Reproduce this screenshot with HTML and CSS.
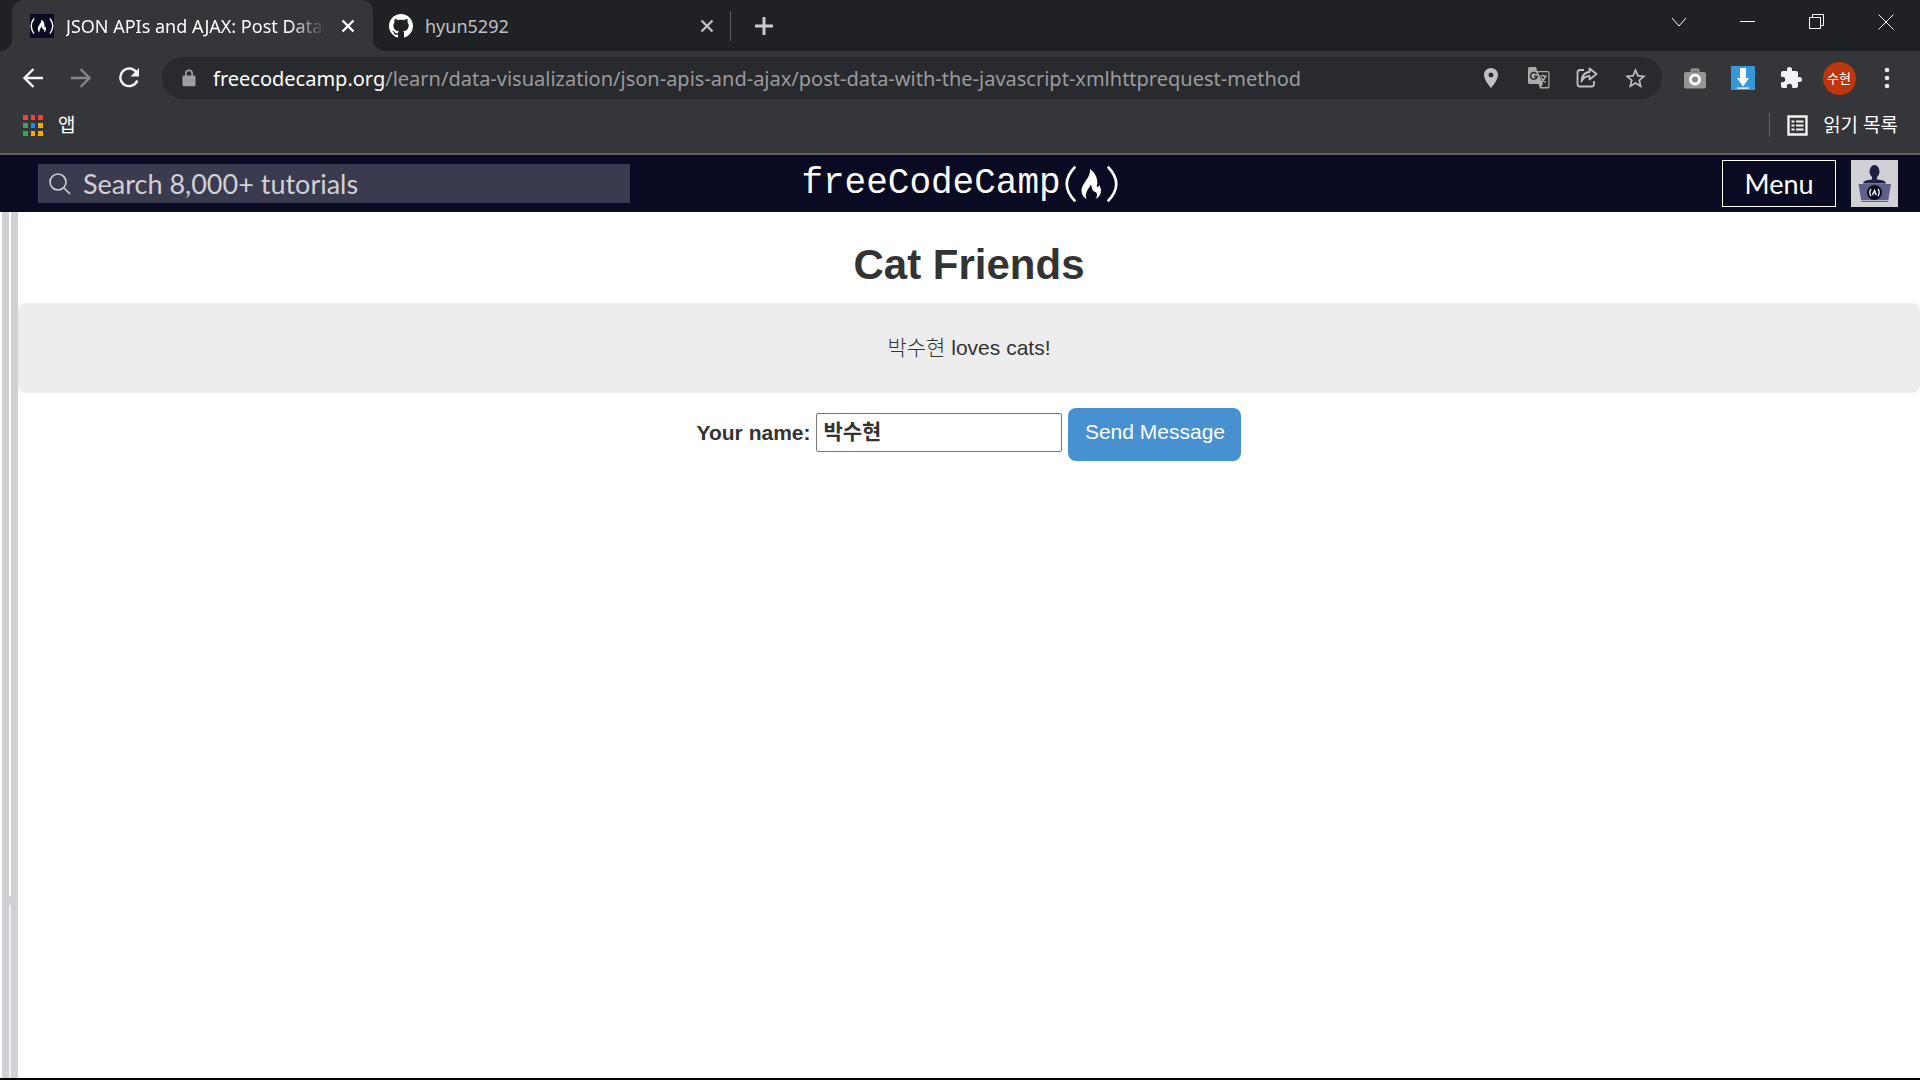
FILE: index.html
```html
<!DOCTYPE html>
<html lang="ko">
<head>
<meta charset="utf-8">
<title>JSON APIs and AJAX: Post Data</title>
<link rel="stylesheet" href="styles.css">
</head>
<body>
<svg class="defs" aria-hidden="true">
  <symbol id="flame" viewBox="0 0 20 30"><path d="M8.500 0C9 5 6.500 8.500 3.500 13C1 16.500 0 19 0 21.500C0 25 1.500 28 5 30C4 27.500 4 25 5.500 22C7 19 8.500 17.500 9.500 15.500C10.500 19 10.500 21.500 12.500 22.500C15 23 15.500 24 15.500 26C15.500 27.500 15 28.800 14 30C17.500 28 19.500 25.500 19.500 21.500C19.500 19.500 18.500 18 18 16C17.200 17 17 18 15.800 18C14.500 17.500 16.200 15 15.800 13C15.500 7 12.500 3 8.500 0Z"/></symbol>
  <symbol id="cross" viewBox="0 0 14 14"><path d="M1.500 1.500 12.500 12.500M12.500 1.500 1.500 12.500" fill="none" stroke="currentColor" stroke-width="2.400"/></symbol>
</svg>
<header class="browser">
  <div class="tabstrip">
    <div class="tab tab-active">
      <svg class="favicon" viewBox="0 0 24 24"><rect width="24" height="24" fill="#0a0a23"/><path d="M4 4.500Q-1.500 12 4 19.500M20 4.500Q25.500 12 20 19.500" fill="none" stroke="#fff" stroke-width="1.400"/><use href="#flame" x="7.500" y="5.500" width="9" height="13" fill="#fff"/></svg>
      <span class="tab-title fade">JSON APIs and AJAX: Post Data</span>
      <button class="tab-close" aria-label="Close tab"><svg width="14" height="14"><use href="#cross"/></svg></button>
    </div>
    <div class="tab">
      <svg class="favicon" viewBox="0 0 16 16" fill="#fff"><path d="M8 0C3.580 0 0 3.580 0 8c0 3.540 2.290 6.530 5.470 7.590.4.070.55-.17.55-.38 0-.19-.01-.82-.01-1.490-2.010.37-2.530-.49-2.690-.94-.09-.23-.48-.94-.82-1.130-.28-.15-.68-.52-.01-.53.63-.01 1.080.58 1.230.82.72 1.210 1.870.87 2.330.66.070-.52.28-.87.51-1.070-1.780-.2-3.640-.89-3.640-3.950 0-.87.31-1.590.82-2.150-.08-.2-.36-1.020.08-2.120 0 0 .67-.21 2.200.82.64-.18 1.320-.27 2-.27s1.360.09 2 .27c1.530-1.040 2.200-.82 2.200-.82.44 1.100.16 1.920.08 2.120.51.56.82 1.270.82 2.150 0 3.070-1.870 3.750-3.650 3.950.29.25.54.73.54 1.480 0 1.070-.01 1.930-.01 2.200 0 .21.15.46.55.38A8.010 8.010 0 0 0 16 8c0-4.420-3.580-8-8-8z"/></svg>
      <span class="tab-title">hyun5292</span>
      <button class="tab-close" aria-label="Close tab"><svg width="14" height="14"><use href="#cross"/></svg></button>
    </div>
    <button class="new-tab" aria-label="New tab"><svg width="18" height="18" viewBox="0 0 18 18"><path d="M9 0V18M0 9H18" stroke="currentColor" stroke-width="3"/></svg></button>
    <div class="window-controls">
      <button aria-label="Search tabs"><svg width="16" height="16" viewBox="0 0 16 16"><path d="M1 4 8 12 15 4"/></svg></button>
      <button aria-label="Minimize"><svg width="15" height="15" viewBox="0 0 15 15"><path d="M0 7.500H15"/></svg></button>
      <button aria-label="Restore"><svg width="15" height="15" viewBox="0 0 15 15"><path d="M.5 3.500h11v11H.5zM3.500 3V.5h11v11H12"/></svg></button>
      <button aria-label="Close"><svg width="16" height="16" viewBox="0 0 16 16"><path d="M.5.5l15 15M15.500.5l-15 15"/></svg></button>
    </div>
  </div>
  <div class="toolbar">
    <button class="tool" aria-label="Back"><svg width="20" height="20" viewBox="0 0 20 20"><path d="M20 10H2M10.500 1 1.500 10l9 9" fill="none" stroke="#f1f3f4" stroke-width="2.400"/></svg></button>
    <button class="tool" aria-label="Forward"><svg width="20" height="20" viewBox="0 0 20 20"><path d="M0 10H18M9.500 1l9 9-9 9" fill="none" stroke="#85868a" stroke-width="2.400"/></svg></button>
    <button class="tool" aria-label="Reload"><svg width="22" height="22" viewBox="0 0 22 22"><path d="M18.500 5.500A8.800 8.800 0 1 0 19.300 13.500" fill="none" stroke="#f1f3f4" stroke-width="2.400"/><path d="M21 1V9.500H12.500z" fill="#f1f3f4"/></svg></button>
    <div class="omnibox">
      <svg class="lock" width="14" height="18" viewBox="0 0 14 18"><path d="M1.500 6.500H3V4.500a4 4 0 0 1 8 0V6.500h1.500A1 1 0 0 1 13.500 7.500V16a1.200 1.200 0 0 1-1.200 1.200H1.700A1.200 1.200 0 0 1 .5 16V7.500a1 1 0 0 1 1-1zM4.700 6.500H9.300V4.500a2.300 2.300 0 0 0-4.600 0z" fill="#9aa0a6"/></svg>
      <span class="url"><span class="host">freecodecamp.org</span>/learn/data-visualization/json-apis-and-ajax/post-data-with-the-javascript-xmlhttprequest-method</span>
      <button class="tool" aria-label="Location"><svg width="24" height="24" viewBox="0 0 24 24"><path d="M12 2C8.130 2 5 5.130 5 9c0 5.250 7 13 7 13s7-7.750 7-13c0-3.870-3.130-7-7-7zm0 9.500a2.500 2.500 0 0 1 0-5 2.500 2.500 0 0 1 0 5z" fill="#bdc1c6"/></svg></button>
      <button class="tool" aria-label="Translate"><svg width="22" height="22" viewBox="0 0 22 22"><path d="M1.500 0H8l1.300 4H20a1.500 1.500 0 0 1 1.500 1.500V20a1.500 1.500 0 0 1-1.500 1.500H12L10.500 17H1.500A1.500 1.500 0 0 1 0 15.500V1.500A1.500 1.500 0 0 1 1.500 0z" fill="#aaa"/><path d="M10 5.200h9.500q.8 0 .8.800v13.200q0 .8-.8.800H13l2-3z" fill="#292a2d"/><path d="M8.500 7A3.300 3.300 0 1 0 9 9.500H6" fill="none" stroke="#292a2d" stroke-width="1.500"/><path d="M11.500 9h7.500M15 7.500V9M17.500 9q-1 4-5 6.500M13 10.500q2 4 5 5" fill="none" stroke="#bbb" stroke-width="1.200"/></svg></button>
      <button class="tool" aria-label="Share"><svg width="22" height="22" viewBox="0 0 22 22" fill="none" stroke="#bdc1c6" stroke-width="1.800"><path d="M8 3H4Q1.500 3 1.500 5.500V17Q1.500 19.500 4 19.500H15.500Q18 19.500 18 17V14"/><path d="M13.500 5V1.500L20.500 7l-7 5.500V9Q8 9 5.500 14.500Q6 5.500 13.500 5z" stroke-linejoin="round"/></svg></button>
      <button class="tool" aria-label="Bookmark"><svg width="25" height="25" viewBox="0 0 24 24"><path d="M22 9.240l-7.190-.62L12 2 9.190 8.630 2 9.240l5.460 4.730L5.820 21 12 17.270 18.180 21l-1.630-7.030L22 9.240zM12 15.400l-3.760 2.270 1-4.280-3.320-2.880 4.380-.38L12 6.100l1.710 4.040 4.380.38-3.320 2.880 1 4.280L12 15.400z" fill="#bdc1c6"/></svg></button>
    </div>
    <button class="tool" aria-label="Camera"><svg width="22" height="21" viewBox="0 0 22 21"><path d="M2 4H6.500V2Q6.500.5 8 .5H14Q15.500.5 15.500 2V4H20a2 2 0 0 1 2 2V18.500a2 2 0 0 1-2 2H2a2 2 0 0 1-2-2V6a2 2 0 0 1 2-2z" fill="#969696"/><path d="M7.500 3.500h7" stroke="#777" stroke-width="2"/><circle cx="11" cy="11.500" r="4.500" fill="#888" stroke="#fff" stroke-width="3"/></svg></button>
    <button class="tool" aria-label="Download"><svg width="24" height="24" viewBox="0 0 24 24"><path d="M0 0H24V24H0z" fill="#3498db"/><path d="M9 2h6v10h3l-6 8.500L6 12h3zM6 21.500H18v1.300H6z" fill="#fff"/></svg></button>
    <button class="tool" aria-label="Extensions"><svg width="24" height="24" viewBox="0 0 24 24"><path d="M20.500 11H19V7a2 2 0 0 0-2-2h-4V3.500a2.500 2.500 0 0 0-5 0V5H4a2 2 0 0 0-1.990 2v3.800H3.500a2.700 2.700 0 0 1 0 5.400H2V20a2 2 0 0 0 2 2h3.800v-1.500a2.700 2.700 0 0 1 5.400 0V22H17a2 2 0 0 0 2-2v-4h1.500a2.500 2.500 0 0 0 0-5z" fill="#f1f3f4"/></svg></button>
    <button class="tool" aria-label="Profile"><span class="profile">수현</span></button>
    <button class="tool" aria-label="More"><svg width="6" height="22" viewBox="0 0 6 22" fill="#e8eaed"><circle cx="3" cy="3" r="2.300"/><circle cx="3" cy="11" r="2.300"/><circle cx="3" cy="19" r="2.300"/></svg></button>
  </div>
  <nav class="bookmarks">
    <a class="bookmark" href="#"><svg width="20" height="21" viewBox="0 0 20 21"><path d="M0 0h5v5H0zM8 0h4v5H8zM15 0h5v5h-5z" fill="#f44336"/><path d="M0 8h5v5H0zM0 16h5v5H0z" fill="#34a853"/><path d="M8 8h4v5H8z" fill="#1a8cff"/><path d="M15 8h5v5h-5zM8 16h4v5H8zM15 16h5v5h-5z" fill="#f9ab00"/></svg>앱</a>
    <a class="bookmark reading-list" href="#"><svg width="21" height="21" viewBox="0 0 21 21"><path d="M1.500 1.500h18v18h-18z" fill="none" stroke="#f1f3f4" stroke-width="2.400"/><path d="M4.500 6.500h3M9 6.500h7.500M4.500 10.500h3M9 10.500h7.500M4.500 14.500h3M9 14.500h7.500" stroke="#f1f3f4" stroke-width="2"/></svg>읽기 목록</a>
  </nav>
</header>

<header class="site-header">
  <label class="search">
    <svg width="22" height="22" viewBox="0 0 22 22" fill="none" stroke="#d0d0d5" stroke-width="1.600"><circle cx="9" cy="9" r="8"/><path d="M15 15l6 6"/></svg>
    <input type="text" aria-label="Search" placeholder="Search 8,000+ tutorials">
  </label>
  <a class="logo" href="#">freeCodeCamp<svg width="54" height="36" viewBox="0 0 54 36"><path d="M9.500 1.500Q-6 18 9.500 34.500M43.500 1.500Q59 18 43.500 34.500" fill="none" stroke="#fff" stroke-width="2.600" stroke-linecap="round"/><use href="#flame" x="16" y="3" width="21" height="30" fill="#fff"/></svg></a>
  <div class="account">
    <button class="menu">Menu</button>
    <a class="avatar" href="#" aria-label="Profile"><svg width="47" height="47" viewBox="0 0 47 47"><path d="M0 0H47V47H0z" fill="#d0d0d5"/><ellipse cx="23.500" cy="11.500" rx="5" ry="6.500" fill="#1f1f43"/><path d="M21 16h5v3.500q9 .5 9 4H12q0-3.500 9-4z" fill="#1f1f43"/><path d="M7.500 24H40L37 42H10.500z" fill="#5f5f8c"/><path d="M10 40.500H37.500" stroke="#b8b8cc"/><circle cx="23.500" cy="32.500" r="7.500" fill="#0a0a23"/><path d="M20 29q-2.500 3.500 0 7M27 29q2.500 3.500 0 7" fill="none" stroke="#fff" stroke-width="1.300"/><use href="#flame" x="21" y="29" width="5" height="7" fill="#fff"/></svg></a>
  </div>
</header>

<div class="workspace">
  <div class="splitters" aria-hidden="true"><i></i><b></b><i></i></div>
  <main class="preview">
    <h1>Cat Friends</h1>
    <p class="message">박수현 loves cats!</p>
    <form class="name-form">
      <label for="name">Your name:</label>
      <input id="name" type="text" value="박수현">
      <button type="button">Send Message</button>
    </form>
  </main>
</div>
</body>
</html>
```
FILE: styles.css
```css
* { box-sizing: border-box; }

body {
  margin: 0;
  min-height: 100vh;
  display: flex;
  flex-direction: column;
  background: #fff;
  border-bottom: 2px solid #000;
  font-family: "Liberation Sans", "Noto Sans CJK KR", sans-serif;
}

button {
  border: 0;
  padding: 0;
  background: none;
  color: inherit;
  font: inherit;
  display: flex;
  align-items: center;
  justify-content: center;
}

a { color: inherit; text-decoration: none; }
svg { flex: none; }
.defs { position: absolute; width: 0; height: 0; }

/* Browser frame */
.browser {
  background: #35363a;
  border-bottom: 2px solid #5f6064;
  color: #fff;
  font-family: "Noto Sans", "Noto Sans CJK KR", sans-serif;
}

.tabstrip {
  display: flex;
  height: 51px;
  padding-left: 12px;
  background: #202124;
}

.tab {
  display: flex;
  align-items: center;
  width: 357px;
  padding: 0 16px;
  color: #bdc1c6;
  font-size: 18px;
  position: relative;
}

.tab-active {
  width: 361px;
  padding: 0 18px;
  background: #35363a;
  border-radius: 12px 12px 0 0;
  color: #fff;
}

.tab-active::before,
.tab-active::after {
  content: "";
  position: absolute;
  bottom: 0;
  width: 12px;
  height: 12px;
}
.tab-active::before { right: 100%; background: radial-gradient(circle at 0 0, transparent 12px, #35363a 12px); }
.tab-active::after { left: 100%; background: radial-gradient(circle at 100% 0, transparent 12px, #35363a 12px); }

.favicon { width: 24px; height: 24px; margin-right: 12px; }
.tab-title { flex: 1; min-width: 0; overflow: hidden; white-space: nowrap; }
.fade {
  -webkit-mask-image: linear-gradient(90deg, #000 86%, transparent);
  mask-image: linear-gradient(90deg, #000 86%, transparent);
}
.tab-close { width: 14px; margin-left: 16px; }

.new-tab {
  height: 30px;
  margin-top: 11px;
  padding: 0 24px;
  border-left: 1px solid #606165;
  color: #c8cacd;
}

.window-controls { display: flex; height: 43px; margin-left: auto; }
.window-controls button { width: 69px; }
.window-controls svg { fill: none; stroke: #fff; }

.toolbar {
  display: flex;
  align-items: center;
  height: 54px;
  padding: 0 9px;
}
.tool { width: 48px; height: 42px; flex: none; }
.omnibox {
  flex: 1;
  min-width: 0;
  display: flex;
  align-items: center;
  height: 42px;
  margin: 0 9px;
  padding: 0 3px 0 20px;
  border-radius: 21px;
  background: #292a2d;
}
.url {
  flex: 1;
  min-width: 0;
  overflow: hidden;
  margin-left: 17px;
  white-space: nowrap;
  font-size: 20px;
  color: #9a9b9d;
}
.host { color: #fff; }
.profile {
  width: 33px;
  height: 33px;
  border-radius: 50%;
  background: #bf360c;
  font-size: 13px;
  line-height: 33px;
}

.bookmarks {
  display: flex;
  justify-content: space-between;
  height: 48px;
  padding: 8px 22px 16px 23px;
  font-size: 19px;
}
.bookmark { display: flex; align-items: center; gap: 15px; line-height: 24px; }
.reading-list { padding-left: 17px; border-left: 1px solid #606165; }

/* Site header */
.site-header {
  display: grid;
  grid-template-columns: 1fr auto 1fr;
  align-items: center;
  height: 57px;
  padding: 0 22px;
  background: #0a0a23;
  color: #fff;
  font-family: Lato, sans-serif;
}
.search {
  display: flex;
  align-items: center;
  gap: 12px;
  width: 76%;
  height: 39px;
  margin-left: 16px;
  padding-left: 11px;
  background: #3b3b4f;
}
.search input {
  flex: 1;
  min-width: 0;
  padding: 0;
  border: 0;
  background: none;
  font: 27px Lato, sans-serif;
  color: #d0d0d5;
}
.search input::placeholder { color: #d0d0d5; opacity: 1; }
.logo {
  display: flex;
  align-items: center;
  gap: 4px;
  font: 36px/48px "Liberation Mono", monospace;
}
.account { display: flex; justify-content: flex-end; gap: 15px; }
.menu { width: 114px; height: 47px; border: 1px solid #fff; font-size: 27px; }
.avatar { display: flex; }

/* Preview */
.workspace { flex: 1; display: flex; }
.splitters {
  display: grid;
  grid-template-columns: 7px 2px 7px;
  margin-left: 2px;
  background: #d0d0d5;
}
.splitters b { background: linear-gradient(#fff 79%, #d0d0d5 79% 80%, #f0f0f4 80%); }
.preview { flex: 1; color: #333; font-size: 21px; text-align: center; }
h1 { margin: 0; padding: 29px 0 14px; font-size: 42px; line-height: 48px; }
.message {
  margin: 0;
  padding: 30px;
  border-radius: 8px;
  background: #ededed;
  font-weight: 300;
  line-height: 30px;
}
.name-form {
  display: flex;
  justify-content: center;
  gap: 6px;
  margin-top: 15px;
  line-height: 30px;
}
.name-form label { padding-top: 10px; font-weight: 700; }
.name-form input {
  width: 246px;
  height: 39px;
  margin-top: 5px;
  padding: 0 6px 5px;
  border: 1px solid #767676;
  border-radius: 2px;
  color: #333;
  font: 700 21px "Liberation Sans", "Noto Sans CJK KR", sans-serif;
}
.name-form button {
  width: 173px;
  height: 53px;
  padding-bottom: 5px;
  border-radius: 8px;
  background: #4791d0;
  color: #fff;
}
```
